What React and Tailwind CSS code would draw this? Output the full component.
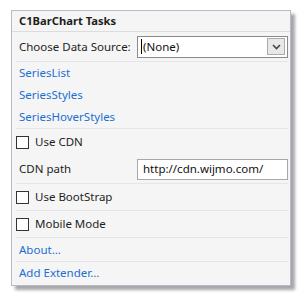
import React from "react";

function Sep() {
  return <div className="ml-[4px] mr-[2px] h-px bg-[#e6e6e6]" />;
}

function Check({ label, h }) {
  return (
    <div className={`flex items-center pl-[4px] ${h}`}>
      <span className="w-[13px] h-[13px] border border-[#333] bg-white" />
      <span className="ml-[6px] text-[#1e1e1e]">{label}</span>
    </div>
  );
}

function Link({ children, h }) {
  return (
    <div className={`flex items-center pl-[7px] ${h} text-[#1a6fd2]`}>{children}</div>
  );
}

export default function App() {
  return (
    <div className="w-[303px] h-[299px] bg-white pt-[10px] pl-[11px] font-['Noto_Sans',sans-serif] text-[11.5px] leading-none">
      <div className="w-[280px] h-[276px] border border-[#b9b9c9] bg-[#f5f5f5] shadow-[4px_4px_3px_rgba(0,0,0,0.35)] flex flex-col">
        <div className="h-[20px] flex items-center pl-[7px] font-bold text-[11.2px] text-[#1e1e1e]">C1BarChart Tasks</div>
        <div className="h-px bg-[#dcdcdc]" />
        <div className="h-[29px] flex items-center pl-[7px] pr-[2px] text-[#1e1e1e]">
          <span className="w-[118px]">Choose Data Source:</span>
          <div className="w-[151px] h-[22px] border border-[#8a8a8a] bg-white flex items-center pr-[2px]">
            <span className="ml-[3px] w-px h-[15px] bg-black" />
            <span className="flex-1 text-[#111] ml-px">(None)</span>
            <span className="w-[18px] h-[17px] border border-[#acacac] bg-[#e8e8e8] flex items-center justify-center">
              <svg width="9" height="6" viewBox="0 0 9 6">
                <path d="M1 1 L4.5 4.5 L8 1" fill="none" stroke="#444" strokeWidth="1.6" />
              </svg>
            </span>
          </div>
        </div>
        <Sep />
        <Link h="h-[22px]">SeriesList</Link>
        <Link h="h-[22px]">SeriesStyles</Link>
        <Link h="h-[22px]">SeriesHoverStyles</Link>
        <Sep />
        <Check label="Use CDN" h="h-[26px]" />
        <div className="h-[28px] flex items-center pl-[7px] pr-[2px] text-[#1e1e1e]">
          <span className="w-[118px]">CDN path</span>
          <div className="w-[151px] h-[21px] border border-[#a8a8a8] bg-white flex items-center pl-[5px] text-[#111]">
            http://cdn.wijmo.com/
          </div>
        </div>
        <Sep />
        <Check label="Use BootStrap" h="h-[26px]" />
        <Sep />
        <Check label="Mobile Mode" h="h-[26px]" />
        <Sep />
        <Link h="h-[23px]">About...</Link>
        <Sep />
        <Link h="h-[22px]">Add Extender...</Link>
      </div>
    </div>
  );
}
